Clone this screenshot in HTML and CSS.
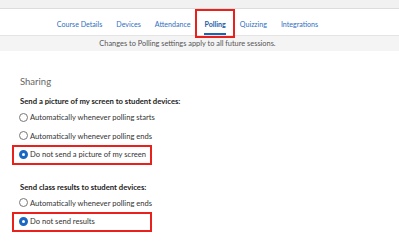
FILE: index.html
```html
<!DOCTYPE html>
<html lang="en">
<head>
    <meta charset="UTF-8">
    <meta name="viewport" content="width=device-width, initial-scale=1.0">
    <title>Polling Settings</title>
    <link rel="stylesheet" href="styles.css">
</head>
<body>
    <div class="top-strip"></div>
    <nav class="tabs">
        <a class="tab">Course Details</a>
        <a class="tab">Devices</a>
        <a class="tab">Attendance</a>
        <a class="tab active marked">Polling</a>
        <a class="tab">Quizzing</a>
        <a class="tab">Integrations</a>
    </nav>
    <div class="notice">Changes to Polling settings apply to all future sessions.</div>

    <div class="settings">
        <h2 class="section-title">Sharing</h2>

        <div class="group">
            <div class="group-label">Send a picture of my screen to student devices:</div>
            <label class="option"><span class="radio"></span>Automatically whenever polling starts</label>
            <label class="option"><span class="radio"></span>Automatically whenever polling ends</label>
            <label class="option marked"><span class="radio checked"></span>Do not send a picture of my screen</label>
        </div>

        <div class="group">
            <div class="group-label">Send class results to student devices:</div>
            <label class="option"><span class="radio"></span>Automatically whenever polling ends</label>
            <label class="option marked"><span class="radio checked"></span>Do not send results</label>
        </div>
    </div>
</body>
</html>
```

FILE: styles.css
```css
body {
    margin: 0;
    font-family: Lato, "Open Sans", Arial, sans-serif;
    background: #fff;
    color: #222;
}
.top-strip {
    height: 8px;
    background: #f1f1f1;
    border-bottom: 1px solid #dcdcdc;
}
.tabs {
    display: flex;
    justify-content: center;
    height: 26px;
    padding-right: 24px;
    background: #fff;
}
.tab {
    position: relative;
    display: flex;
    align-items: center;
    padding: 4px 7px 0;
    font-size: 7.1px;
    color: #2f6fbf;
    text-decoration: none;
}
.tab.active {
    font-weight: 700;
    color: #1d5ea8;
}
.tab.active::before {
    content: "";
    position: absolute;
    left: 7px;
    right: 7px;
    bottom: 0;
    height: 2px;
    background: #1f62b4;
}
.tab.marked::after {
    content: "";
    position: absolute;
    left: -2px;
    right: -2px;
    top: 0;
    bottom: -3px;
    border: 2px solid #e9211d;
}
.notice {
    height: 15px;
    line-height: 15px;
    padding-right: 24px;
    background: #f4f4f4;
    border-top: 1px solid #e4e4e4;
    text-align: center;
    font-size: 7.4px;
    color: #555;
}
.settings {
    padding: 24px 20px 0;
}
.section-title {
    margin: 0 0 8px;
    font-size: 9.5px;
    line-height: 13px;
    font-weight: 400;
    color: #666;
}
.group {
    display: flex;
    flex-direction: column;
    align-items: flex-start;
    margin-bottom: 18px;
}
.group-label {
    font-size: 7.7px;
    line-height: 10px;
    font-weight: 700;
    color: #222;
    margin-bottom: 2px;
}
.option {
    position: relative;
    display: flex;
    align-items: center;
    gap: 2px;
    height: 18.5px;
    font-size: 7.6px;
    color: #333;
}
.option.marked::after {
    content: "";
    position: absolute;
    left: -8px;
    top: 0;
    bottom: -1px;
    width: 140px;
    border: 2px solid #e9211d;
    box-sizing: border-box;
}
.radio {
    width: 9px;
    height: 9px;
    margin-left: -1px;
    border: 1px solid #777;
    border-radius: 50%;
    box-sizing: border-box;
    background: #fff;
}
.radio.checked {
    border: 3px solid #1a68c4;
}
```
